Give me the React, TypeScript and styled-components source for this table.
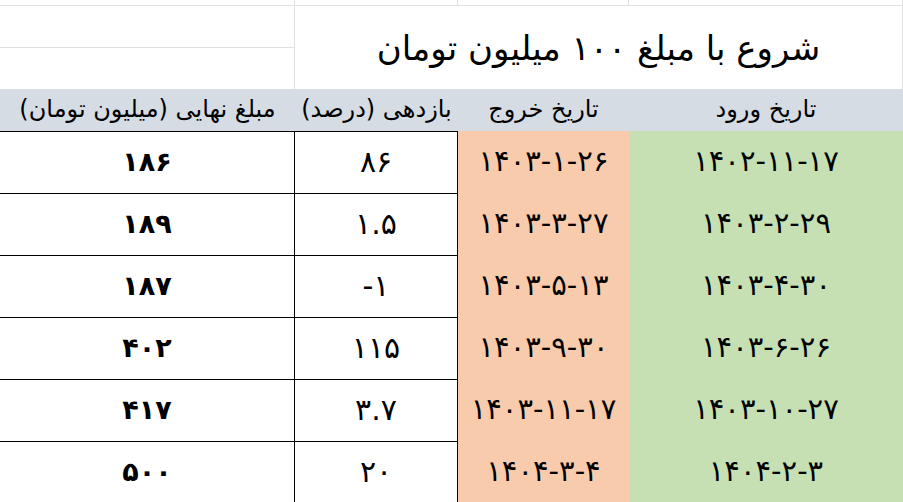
import React from "react";
import styled, { createGlobalStyle } from "styled-components";

const GlobalStyle = createGlobalStyle`
  html, body { margin: 0; padding: 0; background: #ffffff; }
  body { font-family: "DejaVu Sans", "Noto Sans", sans-serif; }
  * { box-sizing: border-box; }
`;

const COLS = "295px 163px 171px 274px";
const GRID = "#e1e1e1";

const Sheet = styled.div`
  width: 903px;
  height: 502px;
  overflow: hidden;
  background: #ffffff;
  display: flex;
  flex-direction: column;
  font-family: "DejaVu Sans", "Noto Sans", sans-serif;
  color: #000000;
`;

const Row = styled.div<{ $h: number; $bg?: string }>`
  display: grid;
  grid-template-columns: ${COLS};
  height: ${(p) => p.$h}px;
  flex: none;
  background: ${(p) => p.$bg ?? "transparent"};
`;

const TitleBlock = styled.div`
  display: grid;
  grid-template-columns: ${COLS};
  grid-template-rows: 42px 41px;
  flex: none;
`;

const GridCell = styled.div<{ $bottom?: boolean }>`
  border-right: 1px solid ${GRID};
  border-bottom: ${(p) => (p.$bottom ? `1px solid ${GRID}` : "none")};
`;

const TitleCell = styled.div`
  grid-column: 2 / 5;
  grid-row: 1 / 3;
  display: flex;
  align-items: center;
  justify-content: center;
  direction: rtl;
  font-size: 34px;
  white-space: nowrap;
  border-right: 1px solid ${GRID};
`;

const HeaderCell = styled.div`
  display: flex;
  align-items: center;
  justify-content: center;
  direction: rtl;
  font-size: 24px;
  white-space: nowrap;
  padding-bottom: 2px;
`;

const DataCell = styled.div<{ $tone: "plain" | "out" | "in"; $bold?: boolean; $size: number }>`
  display: flex;
  align-items: center;
  justify-content: center;
  direction: ltr;
  white-space: nowrap;
  font-size: ${(p) => p.$size}px;
  font-weight: ${(p) => (p.$bold ? 700 : 400)};
  background: ${(p) =>
    p.$tone === "out" ? "#f8cbad" : p.$tone === "in" ? "#c6e0b4" : "#ffffff"};
  border-top: ${(p) => (p.$tone === "plain" ? "1px solid #000000" : "none")};
  border-right: ${(p) => (p.$tone === "plain" ? "1px solid #000000" : "none")};
  padding-bottom: 2px;
`;

type Entry = { final: string; ret: string; out: string; inn: string };

const rows: Entry[] = [
  { final: "۱۸۶", ret: "۸۶", out: "۱۴۰۳-۱-۲۶", inn: "۱۴۰۲-۱۱-۱۷" },
  { final: "۱۸۹", ret: "۱.۵", out: "۱۴۰۳-۳-۲۷", inn: "۱۴۰۳-۲-۲۹" },
  { final: "۱۸۷", ret: "-۱", out: "۱۴۰۳-۵-۱۳", inn: "۱۴۰۳-۴-۳۰" },
  { final: "۴۰۲", ret: "۱۱۵", out: "۱۴۰۳-۹-۳۰", inn: "۱۴۰۳-۶-۲۶" },
  { final: "۴۱۷", ret: "۳.۷", out: "۱۴۰۳-۱۱-۱۷", inn: "۱۴۰۳-۱۰-۲۷" },
  { final: "۵۰۰", ret: "۲۰", out: "۱۴۰۴-۳-۴", inn: "۱۴۰۴-۲-۳" },
];

export default function App() {
  return (
    <>
      <GlobalStyle />
      <Sheet>
        <Row $h={6}>
          <GridCell $bottom />
          <GridCell $bottom />
          <GridCell $bottom />
          <GridCell $bottom />
        </Row>
        <TitleBlock>
          <GridCell $bottom />
          <TitleCell>شروع با مبلغ ۱۰۰ میلیون تومان</TitleCell>
          <GridCell />
        </TitleBlock>
        <Row $h={42} $bg="#d6dce4">
          <HeaderCell>مبلغ نهایی (میلیون تومان)</HeaderCell>
          <HeaderCell>بازدهی (درصد)</HeaderCell>
          <HeaderCell>تاریخ خروج</HeaderCell>
          <HeaderCell>تاریخ ورود</HeaderCell>
        </Row>
        {rows.map((r, i) => (
          <Row $h={62} key={i}>
            <DataCell $tone="plain" $bold $size={27}>{r.final}</DataCell>
            <DataCell $tone="plain" $size={30}>{r.ret}</DataCell>
            <DataCell $tone="out" $size={29}>{r.out}</DataCell>
            <DataCell $tone="in" $size={29}>{r.inn}</DataCell>
          </Row>
        ))}
      </Sheet>
    </>
  );
}
